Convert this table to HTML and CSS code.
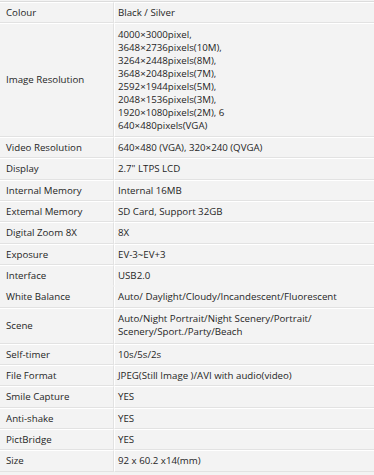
FILE: index.html
```html
<!DOCTYPE html>
<html>
<head>
<meta charset="utf-8">
<link rel="stylesheet" href="styles.css">
</head>
<body>
<table class="specs">
<tr><td class="k">Colour</td><td class="v">Black / Silver</td></tr>
<tr class="tall"><td class="k">Image Resolution</td><td class="v">4000×3000pixel,<br>3648×2736pixels(10M),<br>3264×2448pixels(8M),<br>3648×2048pixels(7M),<br>2592×1944pixels(5M),<br>2048×1536pixels(3M),<br>1920×1080pixels(2M), 6<br>640×480pixels(VGA)</td></tr>
<tr><td class="k">Video Resolution</td><td class="v">640×480 (VGA), 320×240 (QVGA)</td></tr>
<tr><td class="k">Display</td><td class="v">2.7" LTPS LCD</td></tr>
<tr><td class="k">Internal Memory</td><td class="v">Internal 16MB</td></tr>
<tr><td class="k">Extemal Memory</td><td class="v">SD Card, Support 32GB</td></tr>
<tr><td class="k">Digital Zoom 8X</td><td class="v">8X</td></tr>
<tr><td class="k">Exposure</td><td class="v">EV-3~EV+3</td></tr>
<tr class="noline"><td class="k">Interface</td><td class="v">USB2.0</td></tr>
<tr class="after"><td class="k">White Balance</td><td class="v">Auto/ Daylight/Cloudy/Incandescent/Fluorescent</td></tr>
<tr class="two"><td class="k">Scene</td><td class="v">Auto/Night Portrait/Night Scenery/Portrait/<br>Scenery/Sport./Party/Beach</td></tr>
<tr><td class="k">Self-timer</td><td class="v">10s/5s/2s</td></tr>
<tr><td class="k">File Format</td><td class="v">JPEG(Still Image )/AVI with audio(video)</td></tr>
<tr><td class="k">Smile Capture</td><td class="v">YES</td></tr>
<tr><td class="k">Anti-shake</td><td class="v">YES</td></tr>
<tr><td class="k">PictBridge</td><td class="v">YES</td></tr>
<tr><td class="k">Size</td><td class="v">92 x 60.2 x14(mm)</td></tr>
</table>
</body>
</html>
```
FILE: styles.css
```css
html, body {
  margin: 0;
  padding: 0;
  background: #f3f3f3;
}
body {
  padding-top: 1px;
}
.specs {
  width: 374px;
  border-collapse: separate;
  border-spacing: 0;
  border-top: 1px solid #dcdcdc;
  font-family: "Open Sans", "Noto Sans", sans-serif;
  font-size: 9.7px;
  line-height: 13px;
  color: #1f1f1f;
}
.specs td {
  vertical-align: middle;
  border-top: 1px solid #ffffff;
  border-bottom: 1px solid #e2e2e2;
  padding: 3px 4px 3.35px 5px;
  white-space: nowrap;
}
.specs td.k {
  width: 103px;
  padding-left: 6px;
  border-right: 1px solid #e2e2e2;
}
.specs td.v {
  border-left: 1px solid #ffffff;
  padding-left: 3px;
}
.specs tr.tall td {
  padding-top: 3.5px;
  padding-bottom: 4px;
}
.specs tr.two td {
  padding-top: 3.5px;
  padding-bottom: 4.5px;
}
.specs tr.noline td {
  border-bottom-color: transparent;
}
.specs tr.after td {
  border-top-color: transparent;
}
```
